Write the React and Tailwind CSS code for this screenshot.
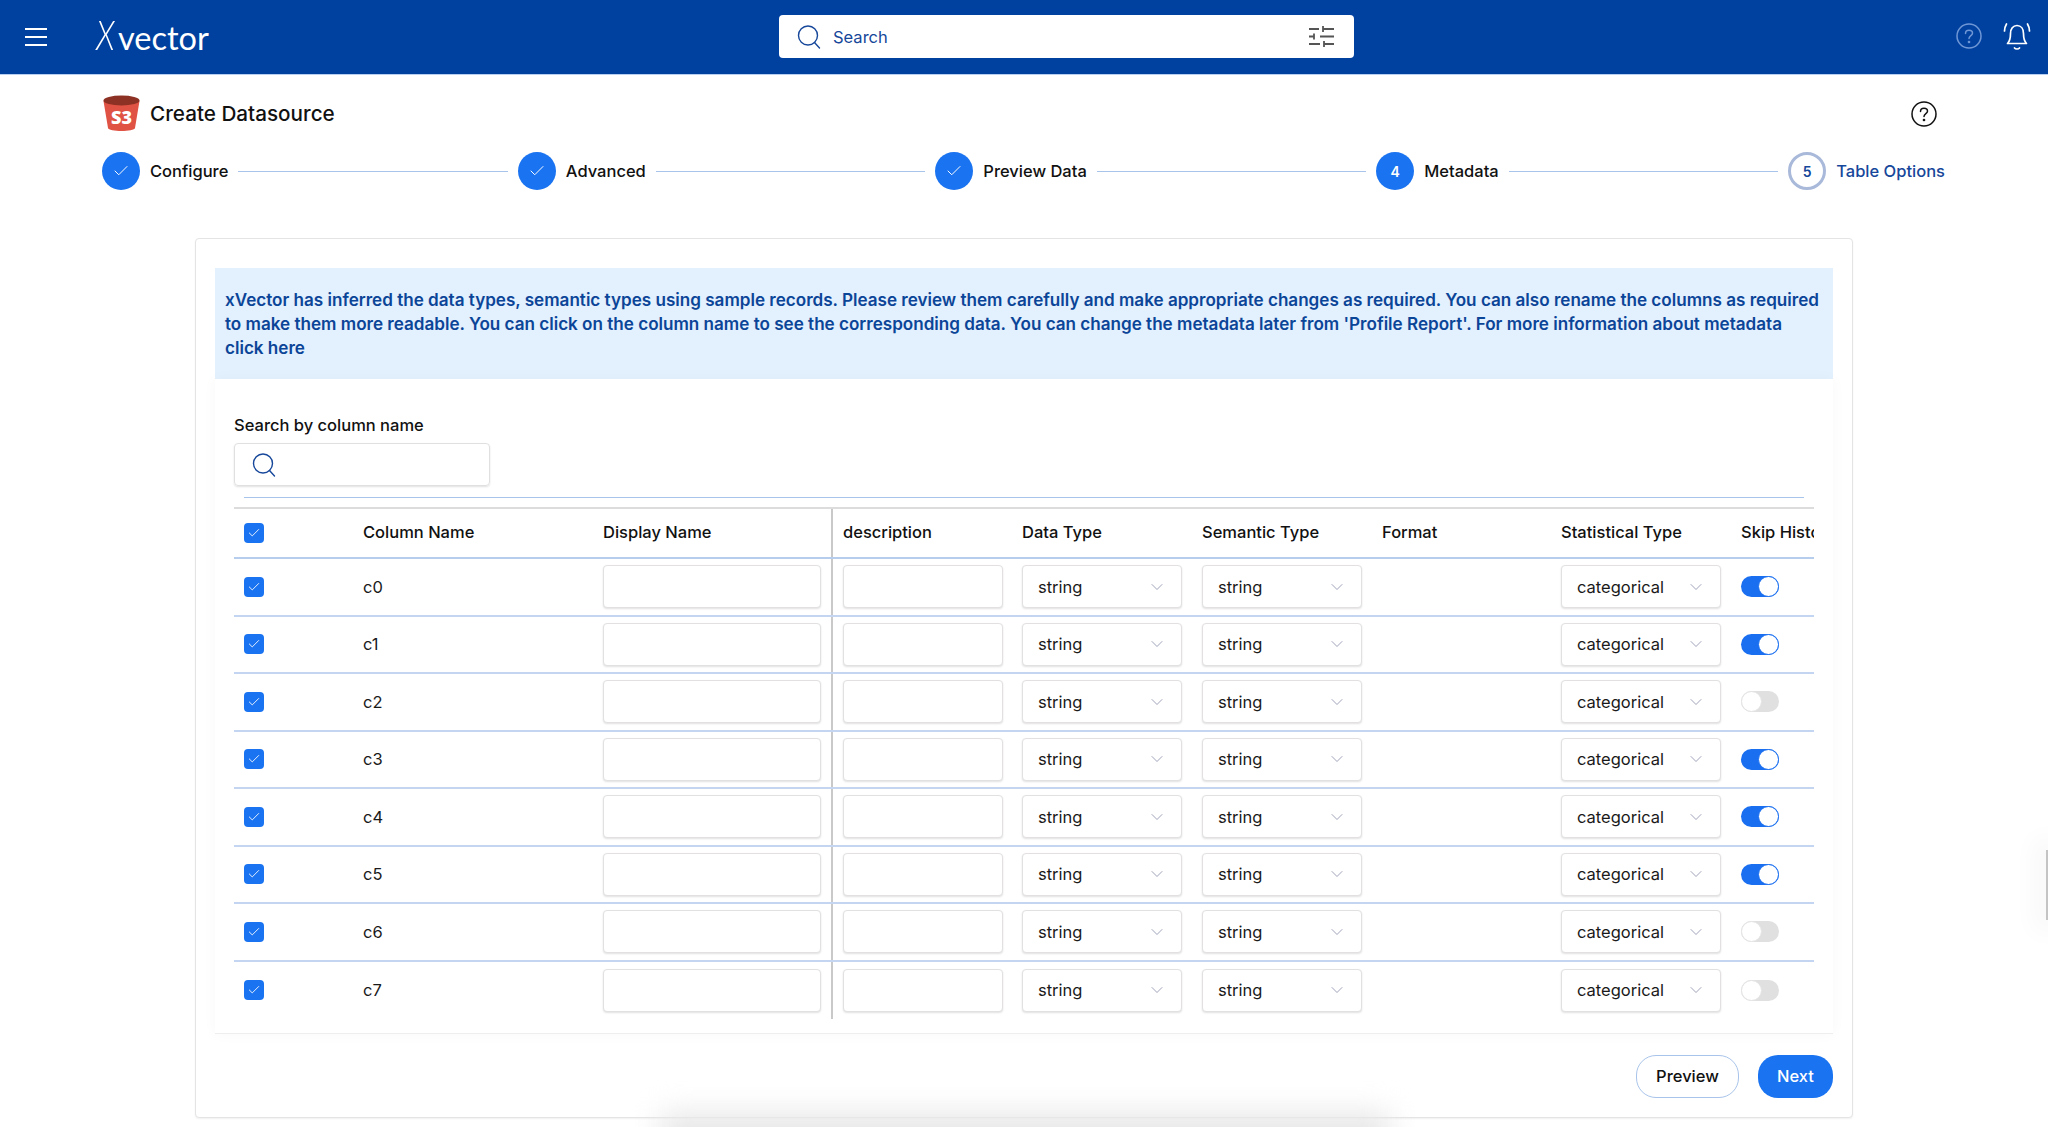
import React from 'react';
import { Check, ChevronDown } from 'lucide-react';

const gridCols = 'grid grid-cols-[129px_240px_228px_191px_180px_180px_179px_180px_75px]';

const steps = [
  { label: 'Configure', done: true },
  { label: 'Advanced', done: true },
  { label: 'Preview Data', done: true },
  { label: 'Metadata', num: 4 },
  { label: 'Table Options', num: 5, pending: true },
];

const rows = [
  { name: 'c0', skip: true },
  { name: 'c1', skip: true },
  { name: 'c2', skip: false },
  { name: 'c3', skip: true },
  { name: 'c4', skip: true },
  { name: 'c5', skip: true },
  { name: 'c6', skip: false },
  { name: 'c7', skip: false },
];

function SearchIcon({ className }) {
  return (
    <svg viewBox="0 0 24 24" fill="none" stroke="currentColor" strokeWidth="1.4" className={className}>
      <circle cx="11" cy="10.5" r="9.5" />
      <path d="M17.5 17.5 L22.5 23" strokeLinecap="round" />
    </svg>
  );
}

function Checkbox() {
  return (
    <div className="w-5 h-5 rounded-[4px] bg-[#1a73f0] flex items-center justify-center">
      <Check className="w-[14px] h-[14px] text-white" strokeWidth={1.5} />
    </div>
  );
}

function Toggle({ on }) {
  return on ? (
    <div className="w-[38px] h-[21px] rounded-full bg-[#1a6ff0] flex justify-end">
      <div className="w-[21px] h-[21px] rounded-full bg-white border border-[#1a6ff0]" />
    </div>
  ) : (
    <div className="w-[38px] h-[21px] rounded-full bg-[#e0e0e0]">
      <div className="w-[21px] h-[21px] rounded-full bg-white border border-[#e4e4e4]" />
    </div>
  );
}

function TextBox({ width }) {
  return <div className={`${width} h-[43px] bg-white border border-[#e2e0e0] rounded-[4px] shadow-[0_1px_2px_rgba(0,0,0,0.12)]`} />;
}

function Select({ value }) {
  return (
    <div className="w-[160px] h-[43px] bg-white border border-[#e2e0e0] rounded-[4px] shadow-[0_1px_2px_rgba(0,0,0,0.12)] flex items-center justify-between pl-[15px] pr-[14px]">
      <span className="mt-[1px] text-[16.5px] text-[#1a1a1a]">{value}</span>
      <ChevronDown className="w-[20px] h-[20px] text-[#8b90ad]" strokeWidth={1} />
    </div>
  );
}

function S3Icon() {
  return (
    <svg viewBox="0 0 37 38" className="w-[37px] h-[38px]">
      <path d="M0.5 6 L5 33 C5.5 37 31.5 37 32 33 L36.5 6 Z" fill="#e05243" />
      <ellipse cx="18.5" cy="5.5" rx="18" ry="5" fill="#8c3123" />
      <text x="18.5" y="29" textAnchor="middle" fontFamily="'Open Sans', sans-serif" fontWeight="800" fontSize="18" fill="#fff">S3</text>
    </svg>
  );
}

function Step({ step }) {
  return (
    <>
      {step.done && (
        <div className="w-[38px] h-[38px] rounded-full bg-[#1a73f0] flex items-center justify-center shrink-0">
          <Check className="w-[18px] h-[18px] text-white" strokeWidth={1.3} />
        </div>
      )}
      {step.num && !step.pending && (
        <div className="w-[38px] h-[38px] rounded-full bg-[#1a73f0] flex items-center justify-center shrink-0 text-white text-[14px] font-semibold">{step.num}</div>
      )}
      {step.pending && (
        <div className="w-[38px] h-[38px] rounded-full border-[3px] border-[#a9b9da] flex items-center justify-center shrink-0 text-[#16479a] text-[14px] font-semibold">{step.num}</div>
      )}
      <span className={`ml-[10px] text-[16.5px] font-medium whitespace-nowrap ${step.pending ? 'text-[#16479a]' : 'text-[#111]'}`}>{step.label}</span>
    </>
  );
}

export default function App() {
  return (
    <div className="relative h-screen overflow-hidden bg-white font-['Inter','Liberation_Sans',sans-serif]">
      {/* header */}
      <div className="h-[75px] bg-[#00419f] border-b border-[#b9cff2] flex items-center relative">
        <div className="ml-[25px] w-[22px] flex flex-col gap-[6px]">
          <div className="h-[2px] bg-white" />
          <div className="h-[2px] bg-white" />
          <div className="h-[2px] bg-white" />
        </div>
        <div className="ml-[49px] -mt-[5px] flex items-baseline text-white font-['Lato',sans-serif] font-normal leading-none">
          <span className="w-[22px] text-[41px] italic font-light scale-x-[0.78] origin-left inline-block">X</span>
          <span className="text-[32.5px]">vector</span>
        </div>
        <div className="absolute left-[779px] top-[15px] w-[575px] h-[43px] bg-white rounded-[4px] flex items-center pl-[18px] pr-[20px]">
          <SearchIcon className="w-[24px] h-[24px] text-[#16479a]" />
          <span className="ml-[12px] mt-[1px] text-[16.5px] text-[#16479a]">Search</span>
          <svg viewBox="0 0 25 21" fill="none" stroke="#555" strokeWidth="1.8" className="w-[25px] h-[21px] ml-auto">
            <path d="M0 3H10M14 3H25M14 0V6" />
            <path d="M0 10.5H5M5 7.5V13.5M11 10.5H25" />
            <path d="M0 18H11M15 18H25M15 15V21" />
          </svg>
        </div>
        <svg viewBox="0 0 26 26" fill="none" stroke="#6f97d6" strokeWidth="1.5" className="absolute left-[1956px] top-[23px] w-[26px] h-[26px]">
          <circle cx="13" cy="13" r="12" />
          <path d="M9.5 10.5C9.5 8.5 11 7.3 13 7.3S16.5 8.6 16.5 10.3C16.5 12.6 13 12.8 13 15.5" strokeLinecap="round" />
          <circle cx="13" cy="19" r="0.6" />
        </svg>
        <svg viewBox="0 0 28 30" fill="none" stroke="#fff" strokeWidth="1.7" className="absolute left-[2003px] top-[22px] w-[28px] h-[30px]">
          <path d="M4.5 21.5C7 19 7.5 16.5 7.5 11.5C7.5 7 10 3.5 14 3.5S20.5 7 20.5 11.5C20.5 16.5 21 19 23.5 21.5Z" strokeLinejoin="round" />
          <path d="M11.5 26C12.5 27.3 15.5 27.3 16.5 26" strokeLinecap="round" />
          <path d="M3.5 2C2 4.5 1.5 6.5 1.5 9M24.5 2C26 4.5 26.5 6.5 26.5 9" strokeLinecap="round" />
        </svg>
      </div>

      {/* title */}
      <div className="ml-[103px] mr-[111px] mt-[20px] h-[38px] flex items-center">
        <S3Icon />
        <h1 className="ml-[10px] text-[20.7px] font-medium text-[#111]">Create Datasource</h1>
        <svg viewBox="0 0 26 26" fill="none" stroke="#111" strokeWidth="1.5" className="ml-auto w-[26px] h-[26px]">
          <circle cx="13" cy="13" r="12" />
          <path d="M9.5 10.5C9.5 8.5 11 7.3 13 7.3S16.5 8.6 16.5 10.3C16.5 12.6 13 12.8 13 15.5" strokeLinecap="round" />
          <circle cx="13" cy="19" r="0.6" />
        </svg>
      </div>

      {/* stepper */}
      <div className="ml-[102px] w-[1843px] mt-[19px] h-[38px] flex items-center">
        {steps.map((step, i) => (
          <React.Fragment key={step.label}>
            <Step step={step} />
            {i < steps.length - 1 && <div className="flex-1 h-[1px] bg-[#a9c4ea] mx-[10px]" />}
          </React.Fragment>
        ))}
      </div>

      {/* card */}
      <div className="ml-[195px] w-[1658px] mt-[48px] h-[880px] bg-white border border-[#e4e4e4] rounded-[4px] px-[19px] pt-[29px] shadow-[0_1px_2px_rgba(0,0,0,0.06)]">
        <div className="h-[111px] bg-[#e3f0fd] pl-[10px] pr-[12px] pt-[20px] text-[17.08px] leading-[24px] font-semibold text-[#0b4598]">
          xVector has inferred the data types, semantic types using sample records. Please review them carefully and make appropriate changes as required. You can also rename the columns as required to make them more readable. You can click on the column name to see the corresponding data. You can change the metadata later from 'Profile Report'. For more information about metadata click here
        </div>

        <div className="h-[655px] bg-white border-b border-[#eeeeee] px-[19px] pt-[34px] shadow-[0_0_14px_rgba(0,0,0,0.03)]">
          <div className="text-[16.5px] leading-[24px] font-medium text-[#111]">Search by column name</div>
          <div className="mt-[6px] w-[256px] h-[43px] border border-[#e0e0e0] rounded-[4px] shadow-[0_1px_2px_rgba(0,0,0,0.12)] flex items-center pl-[17px]">
            <SearchIcon className="w-[24px] h-[24px] text-[#16479a]" />
          </div>
          <div className="ml-[10px] mt-[11px] w-[1560px] h-[1px] bg-[#a9c4ea]" />

          <div className="mt-[9px] w-[1580px] overflow-hidden border-t-2 border-[#dcdcdc]">
            <div className={`${gridCols} w-[1650px] h-[50px] items-center border-b-2 border-[#b7cdee] text-[16.5px] font-medium text-[#111]`}>
              <div className="pl-[10px] -mt-[1px]"><Checkbox /></div>
              <div className="-mt-[1px]">Column Name</div>
              <div className="-mt-[1px]">Display Name</div>
              <div className="h-full border-l-2 border-[#c9c9c9] pl-[10px] pb-[1px] flex items-center">description</div>
              <div className="-mt-[1px]">Data Type</div>
              <div className="-mt-[1px]">Semantic Type</div>
              <div className="-mt-[1px]">Format</div>
              <div className="-mt-[1px]">Statistical Type</div>
              <div className="-mt-[1px] whitespace-nowrap">Skip Histogram</div>
            </div>
            {rows.map((row, i) => (
              <div key={row.name} className={`${gridCols} w-[1650px] h-[57.5px] items-center text-[16.5px] text-[#1a1a1a] ${i < rows.length - 1 ? 'border-b-2 border-[#c3d5f1]' : ''}`}>
                <div className="pl-[10px]"><Checkbox /></div>
                <div className="mt-[1px]">{row.name}</div>
                <div><TextBox width="w-[218px]" /></div>
                <div className="h-full border-l-2 border-[#c9c9c9] pl-[10px] flex items-center"><TextBox width="w-[160px]" /></div>
                <div><Select value="string" /></div>
                <div><Select value="string" /></div>
                <div />
                <div><Select value="categorical" /></div>
                <div><Toggle on={row.skip} /></div>
              </div>
            ))}
          </div>
        </div>

        <div className="mt-[21px] flex justify-end gap-[19px] text-[16.5px] font-medium">
          <button className="w-[103px] h-[43px] rounded-[20px] border border-[#a9c4ea] text-[#111] bg-white">Preview</button>
          <button className="w-[75px] h-[43px] rounded-[20px] bg-[#1a73f0] text-white">Next</button>
        </div>
      </div>

      {/* faint shadows bleeding in at the window edges */}
      <div className="absolute left-[660px] top-[1112px] w-[730px] h-[50px] bg-[#e8e8e8] blur-[14px] pointer-events-none" />
      <div className="absolute left-[2046px] top-[850px] w-[2px] h-[70px] bg-[#c4c4c4] shadow-[0_0_24px_12px_rgba(0,0,0,0.03)] pointer-events-none" />
    </div>
  );
}
